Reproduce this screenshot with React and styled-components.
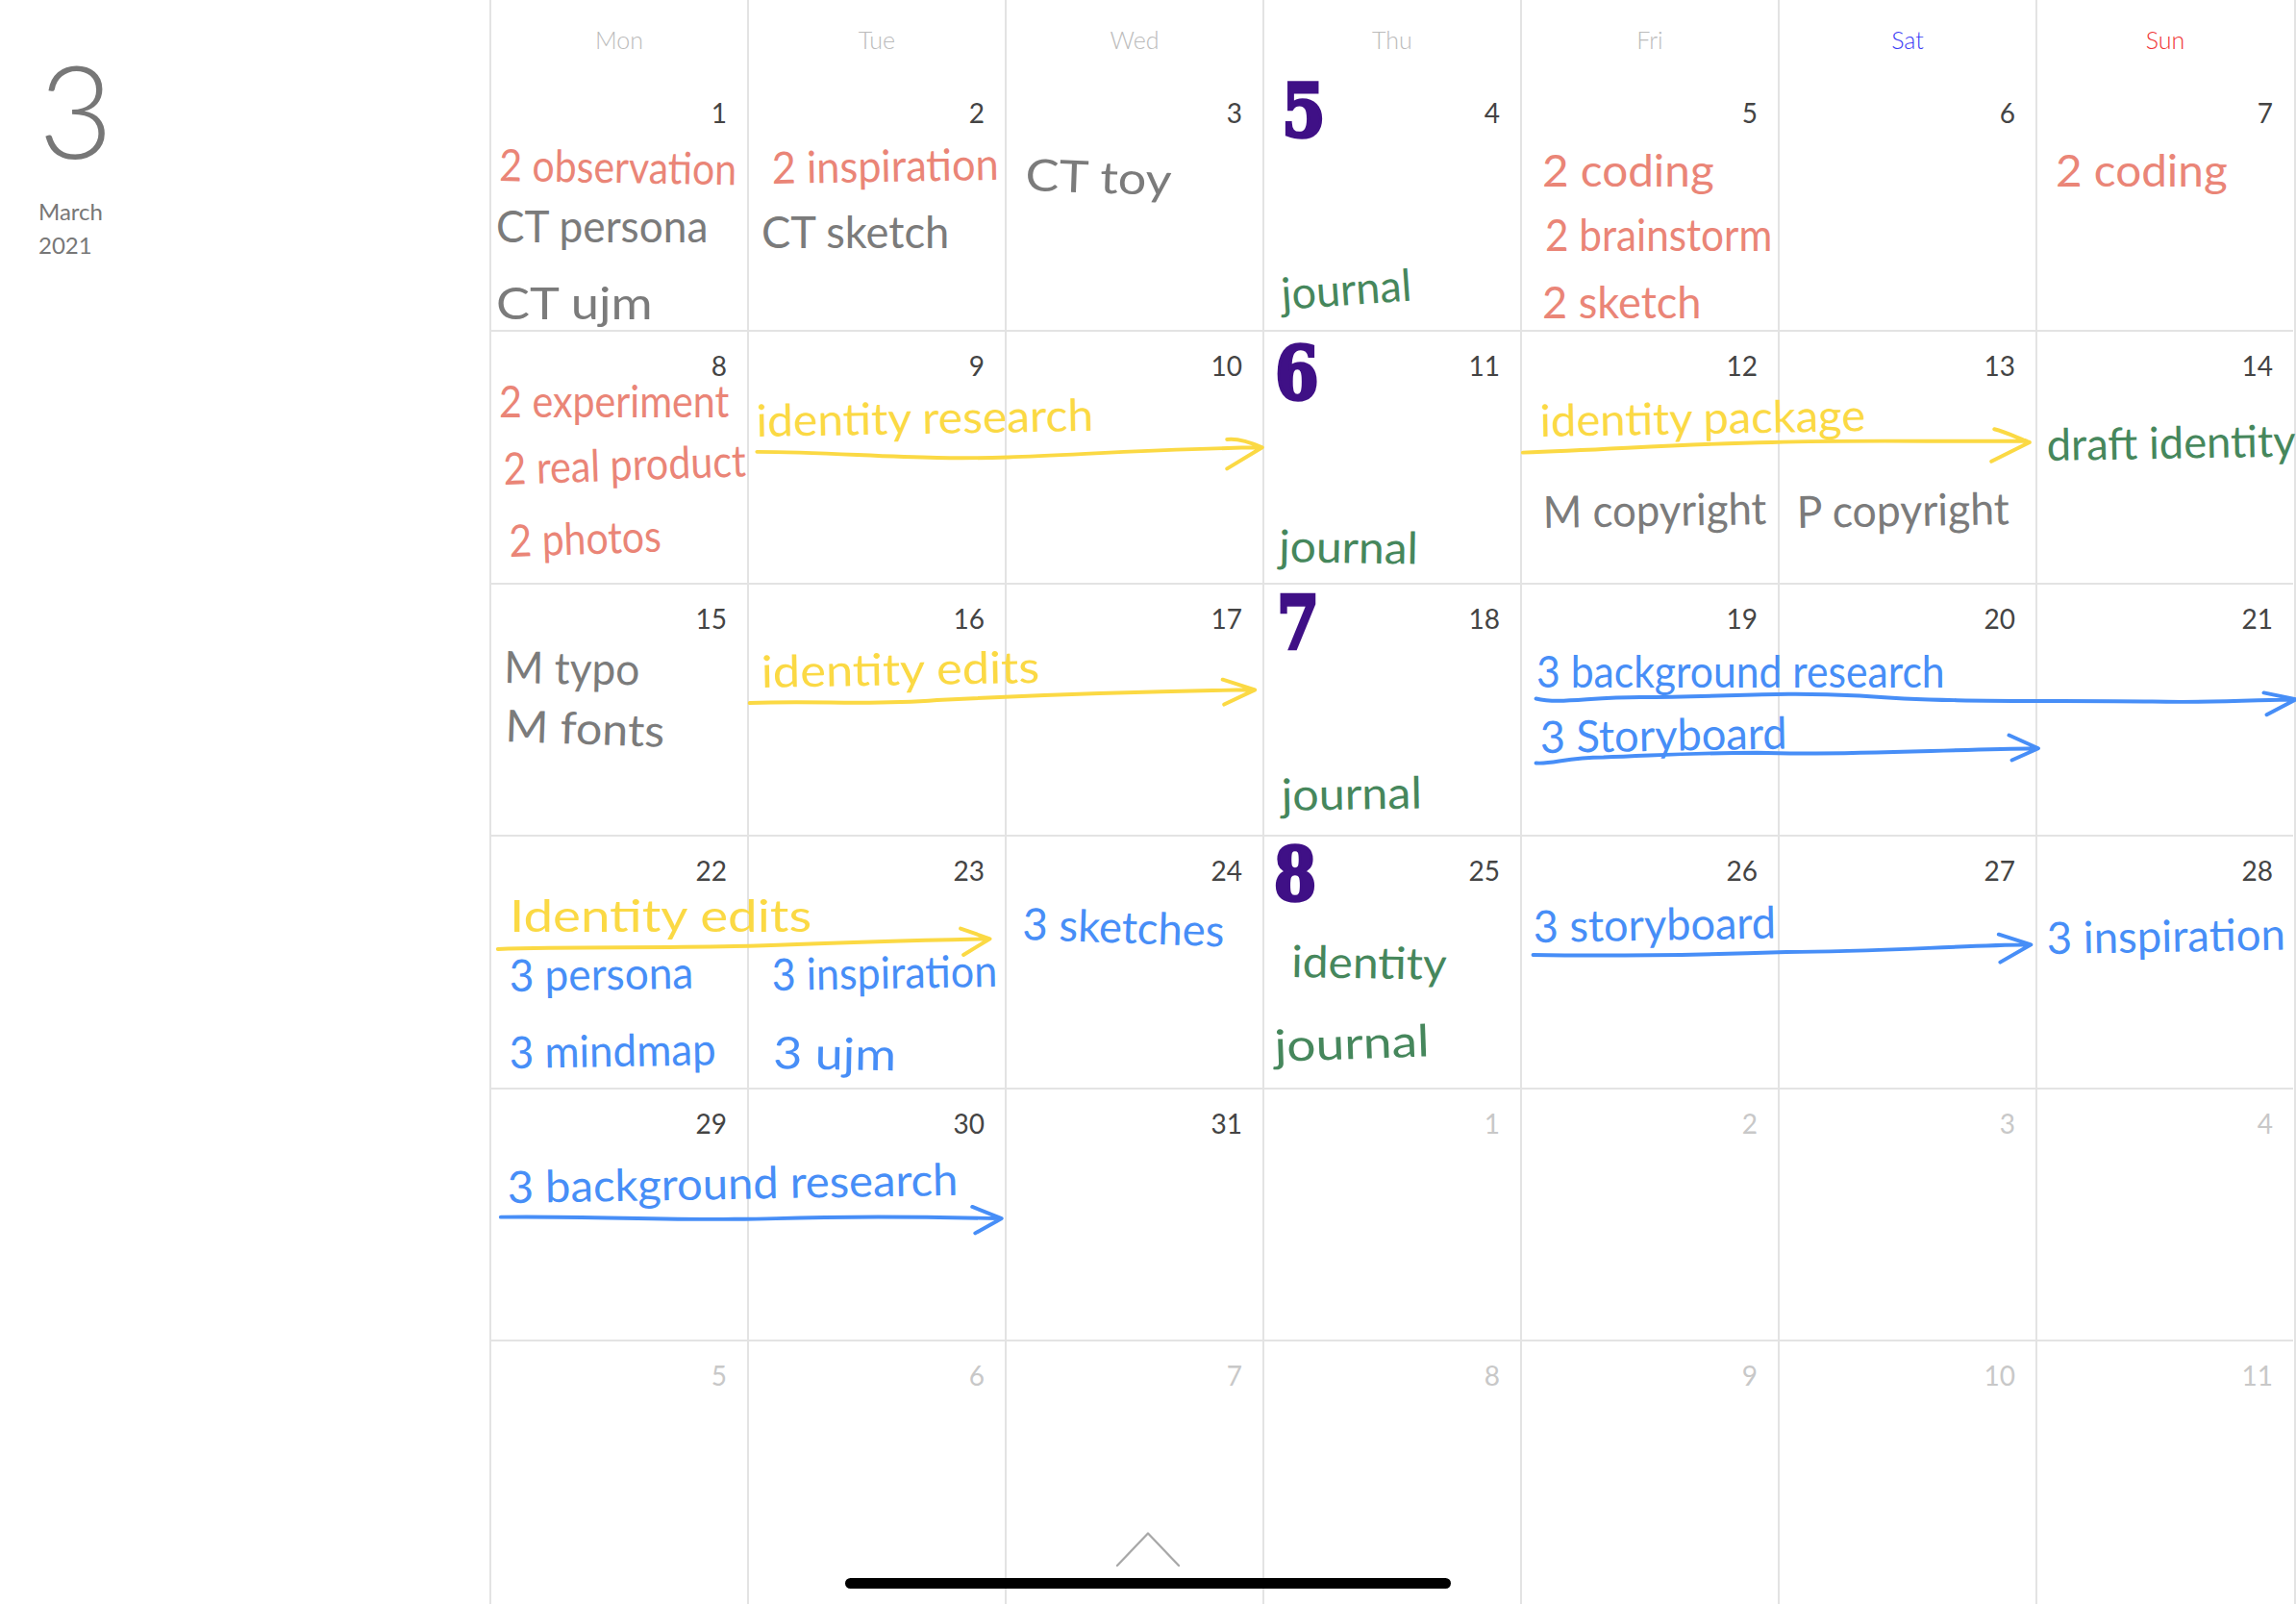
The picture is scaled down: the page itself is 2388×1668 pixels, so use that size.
import React, { useLayoutEffect, useRef } from 'react';
import styled, { createGlobalStyle } from 'styled-components';

const GlobalStyle = createGlobalStyle`
    html, body {
        margin: 0;
        padding: 0;
        background: #fff;
    }
    body {
        font-family: "Lato", "Noto Sans", sans-serif;
    }
`;

const RED = '#ea8577';
const GREY = '#7b7b7b';
const GREEN = '#46875c';
const YELLOW = '#fbd944';
const BLUE = '#478ef7';
const PURPLE = '#3f1086';

const Page = styled.div`
    position: relative;
    display: flex;
    width: 2388px;
    height: 1668px;
    overflow: hidden;
    background: #fff;
`;
const Sidebar = styled.aside`
    flex: 0 0 509px;
    display: flex;
    flex-direction: column;
    padding: 32px 0 0 40px;
    box-sizing: border-box;
    color: #777;
`;
const BigMonth = styled.div`
    font-size: 134px;
    font-weight: 300;
    line-height: 164px;
`;
const MonthLabel = styled.div`
    margin-top: 6px;
    font-size: 24px;
    line-height: 35px;
`;
const Grid = styled.div`
    flex: 1;
    display: grid;
    grid-template-columns: repeat(7, 268px);
    grid-template-rows: 82px 263px repeat(4, 262.5px) 1fr;
`;
const Weekday = styled.div`
    display: flex;
    align-items: center;
    justify-content: center;
    border-left: 2px solid #e3e3e3;
    font-size: 25px;
    font-weight: 300;
    color: ${({ $color }) => $color || '#bbb'};
`;
const Cell = styled.div`
    box-sizing: border-box;
    padding: 18px 21px 0 0;
    border-left: 2px solid #e3e3e3;
    border-bottom: 2px solid #e3e3e3;
    text-align: right;
    font-size: 28px;
    line-height: 34px;
    color: ${({ $muted }) => ($muted ? '#c8c8c8' : '#444')};
    ${({ $last }) => $last && 'border-bottom: 0;'}
`;
const EndLine = styled.div`
    position: absolute;
    top: 0;
    right: 0;
    bottom: 0;
    width: 2px;
    background: #e3e3e3;
`;
const InkText = styled.span`
    position: absolute;
    left: ${({ $x }) => $x}px;
    top: ${({ $y }) => $y}px;
    transform-origin: 0 100%;
    white-space: pre;
    font-size: ${({ $size }) => $size}px;
    line-height: 0.8;
    color: ${({ $color }) => $color};
`;
const Stamp = styled(InkText)`
    font-family: "DejaVu Serif", "Liberation Serif", serif;
    font-weight: 700;
    -webkit-text-stroke: 3.5px ${PURPLE};
`;
const Drawing = styled.svg`
    position: absolute;
    left: 0;
    top: 0;
    width: 2388px;
    height: 1668px;
    pointer-events: none;
    fill: none;
    stroke-linecap: round;
    stroke-linejoin: round;
`;
const HomeBar = styled.div`
    position: absolute;
    left: 879px;
    bottom: 16px;
    width: 630px;
    height: 11px;
    border-radius: 6px;
    background: #000;
`;

const weekdays = [
    { label: 'Mon' },
    { label: 'Tue' },
    { label: 'Wed' },
    { label: 'Thu' },
    { label: 'Fri' },
    { label: 'Sat', color: '#3c3cf5' },
    { label: 'Sun', color: '#f03434' },
];

const days = [
    ...Array.from({ length: 31 }, (_, i) => ({ n: i + 1 })),
    ...Array.from({ length: 11 }, (_, i) => ({ n: i + 1, muted: true })),
];

// handwriting, measured on the 1568 wide shot: left, right, baseline, tilt
const K = 2388 / 1568;
const inks = [
    ['2 observation', RED, 341, 503, 124, 1],
    ['CT persona', GREY, 339, 484, 166, 0],
    ['CT ujm', GREY, 339, 446, 219, 0],
    ['2 inspiration', RED, 527, 682, 126, -1],
    ['CT sketch', GREY, 520, 648, 170, 0],
    ['CT toy', GREY, 700, 800, 131, 2],
    ['journal', GREEN, 876, 965, 212, -4],
    ['2 coding', RED, 1053, 1170, 128, 0],
    ['2 brainstorm', RED, 1055, 1210, 172, 0],
    ['2 sketch', RED, 1053, 1162, 218, 0],
    ['2 coding', RED, 1404, 1521, 128, 0],
    ['2 experiment', RED, 341, 498, 286, 0],
    ['2 real product', RED, 344, 510, 332, -2],
    ['2 photos', RED, 348, 452, 381, -2],
    ['identity research', YELLOW, 517, 747, 299, -1],
    ['journal', GREEN, 873, 968, 384, 1],
    ['identity package', YELLOW, 1052, 1274, 299, -1],
    ['M copyright', GREY, 1054, 1207, 361, -1],
    ['P copyright', GREY, 1227, 1372, 361, -1],
    ['draft identity', GREEN, 1398, 1568, 315, -1],
    ['M typo', GREY, 344, 437, 467, 1],
    ['M fonts', GREY, 345, 454, 507, 2],
    ['identity edits', YELLOW, 520, 710, 470, -1],
    ['journal', GREEN, 875, 971, 554, -1],
    ['3 background research', BLUE, 1049, 1328, 470, 0],
    ['3 Storyboard', BLUE, 1052, 1221, 515, -1],
    ['Identity edits', YELLOW, 348, 554, 637, 0],
    ['3 persona', BLUE, 348, 474, 678, -1],
    ['3 mindmap', BLUE, 348, 489, 730, -1],
    ['3 inspiration', BLUE, 527, 681, 677, -1],
    ['3 ujm', BLUE, 528, 612, 730, 1],
    ['3 sketches', BLUE, 698, 836, 642, 2],
    ['identity', GREEN, 882, 988, 668, 1],
    ['journal', GREEN, 871, 977, 726, -2],
    ['3 storyboard', BLUE, 1047, 1213, 644, -1],
    ['3 inspiration', BLUE, 1398, 1561, 652, -1],
    ['3 background research', BLUE, 347, 655, 822, -1],
];

const stamps = [
    ['5', 875, 905, 94],
    ['6', 871, 901, 273],
    ['7', 872, 901, 443],
    ['8', 870, 899, 615],
];

const strokes = [
    // identity research
    [YELLOW, 'M517 308.5 C560 308.5 600 312 640 312.5 C700 314 760 307 861 305.5 M838 300 C846 299 854 302 862 305.5 L838 320'],
    // identity package
    [YELLOW, 'M1040 309 C1100 307 1150 303 1210 302 C1280 300 1330 302 1384 301 M1362 293 C1370 295 1378 299 1386 302 L1360 315'],
    // identity edits
    [YELLOW, 'M512 480 C560 478 590 482 640 478 C720 474 790 472 855 471 M835 464 L857 471 L836 481'],
    [YELLOW, 'M340 648 C400 646 470 648 540 645 C590 643 630 642 674 641 M656 634 L676 641 L658 652'],
    // background research
    [BLUE, 'M1049 477 C1065 481 1085 476 1120 476 C1180 476 1210 472 1270 475 C1330 480 1400 478 1470 479 C1510 480 1540 478 1567 477.5 M1546 473 L1568 477.5 L1548 488'],
    [BLUE, 'M342 831 C400 830 470 834 530 832 C590 830 640 831 682 832 M664 824 L684 832 L666 842'],
    // storyboard
    [BLUE, 'M1049 521 C1060 522 1070 517 1095 517 C1130 516 1150 514 1200 514 C1260 516 1320 512 1391 511 M1372 502 L1392 511 L1374 519'],
    [BLUE, 'M1047 652 C1100 653 1160 652 1220 650 C1280 650 1330 646 1385 645 M1365 638 L1387 645 L1366 657'],
];

const Ink = ({ text, color, left, right, base, tilt }) => {
    const ref = useRef(null);
    const size = 46;

    // squeeze the text to the width the pen took
    useLayoutEffect(() => {
        const width = (right - left) * K;
        const scale = width / ref.current.offsetWidth;
        ref.current.style.transform = `rotate(${tilt}deg) scaleX(${scale})`;
    }, [left, right, tilt]);

    return (
        <InkText
            ref={ref}
            $x={Math.round(left * K)}
            $y={Math.round(base * K - size * 0.787)}
            $size={size}
            $color={color}
        >
            {text}
        </InkText>
    );
};

const WeekStamp = ({ text, left, right, base }) => {
    const ref = useRef(null);
    const size = 76;

    useLayoutEffect(() => {
        const scale = ((right - left) * K) / ref.current.offsetWidth;
        ref.current.style.transform = `scaleX(${scale})`;
    }, [left, right]);

    return (
        <Stamp
            ref={ref}
            $x={Math.round(left * K)}
            $y={Math.round(base * K - size * 0.75)}
            $size={size}
            $color={PURPLE}
        >
            {text}
        </Stamp>
    );
};

export default function App() {
    return (
        <Page>
            <GlobalStyle />
            <Sidebar>
                <BigMonth>3</BigMonth>
                <MonthLabel>March<br />2021</MonthLabel>
            </Sidebar>
            <Grid>
                {weekdays.map((d) => (
                    <Weekday key={d.label} $color={d.color}>{d.label}</Weekday>
                ))}
                {days.map((d, i) => (
                    <Cell key={i} $muted={d.muted} $last={i >= 35}>{d.n}</Cell>
                ))}
            </Grid>
            <EndLine />

            {inks.map(([text, color, left, right, base, tilt], i) => (
                <Ink key={i} text={text} color={color} left={left} right={right} base={base} tilt={tilt} />
            ))}
            {stamps.map(([text, left, right, base]) => (
                <WeekStamp key={text} text={text} left={left} right={right} base={base} />
            ))}

            <Drawing viewBox="0 0 1568 1095.2">
                {strokes.map(([color, d], i) => (
                    <path key={i} d={d} stroke={color} strokeWidth="2.6" />
                ))}
                <path d="M763 1069 L784 1047 L805 1069" stroke="#a8a8a8" strokeWidth="1.5" />
            </Drawing>
            <HomeBar />
        </Page>
    );
}
